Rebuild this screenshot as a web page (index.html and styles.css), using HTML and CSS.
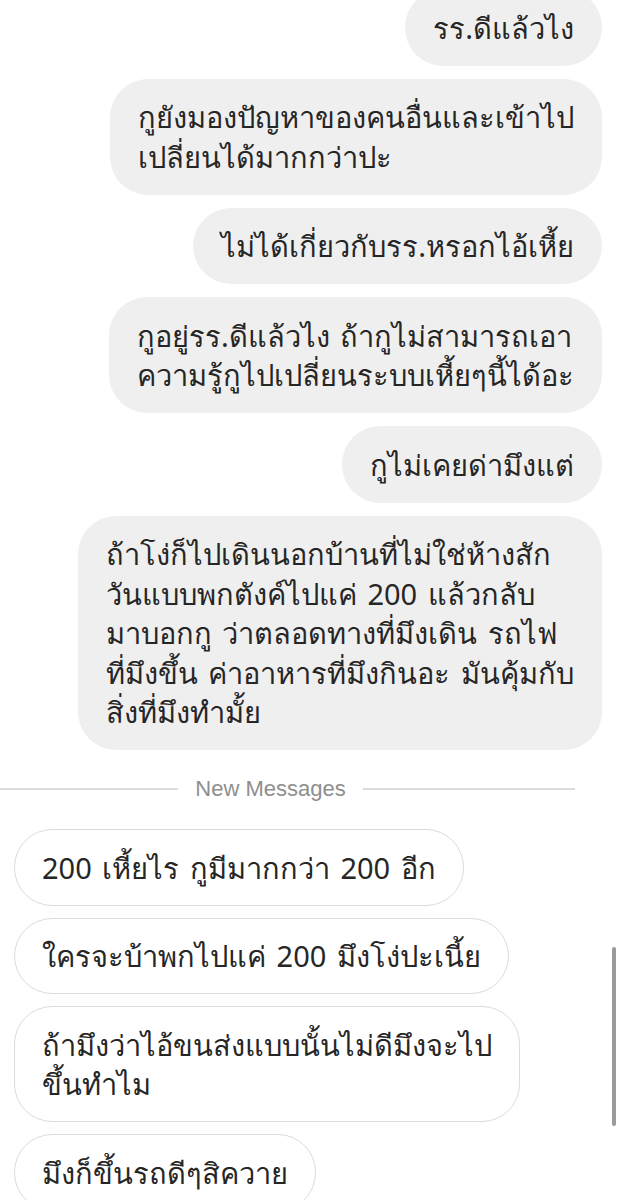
FILE: index.html
```html
<!DOCTYPE html>
<html lang="th">
<head>
    <meta charset="UTF-8">
    <meta name="viewport" content="width=device-width, initial-scale=1.0">
    <title>Chat</title>
    <link rel="stylesheet" href="styles.css">
</head>
<body>
    <div class="chat">
        <!-- Sent messages -->
        <div class="thread sent">
            <div class="bubble">รร.ดีแล้วไง</div>
            <div class="bubble">กูยังมองปัญหาของคนอื่นและเข้าไป<br>เปลี่ยนได้มากกว่าปะ</div>
            <div class="bubble">ไม่ได้เกี่ยวกับรร.หรอกไอ้เหี้ย</div>
            <div class="bubble">กูอยู่รร.ดีแล้วไง ถ้ากูไม่สามารถเอา<br>ความรู้กูไปเปลี่ยนระบบเหี้ยๆนี้ได้อะ</div>
            <div class="bubble">กูไม่เคยด่ามึงแต่</div>
            <div class="bubble">ถ้าโง่ก็ไปเดินนอกบ้านที่ไม่ใช่ห้างสัก<br>วันแบบพกตังค์ไปแค่ 200 แล้วกลับ<br>มาบอกกู ว่าตลอดทางที่มึงเดิน รถไฟ<br>ที่มึงขึ้น ค่าอาหารที่มึงกินอะ มันคุ้มกับ<br>สิ่งที่มึงทำมั้ย</div>
        </div>

        <div class="divider"><span>New Messages</span></div>

        <!-- Received messages -->
        <div class="thread received">
            <div class="bubble">200 เหี้ยไร กูมีมากกว่า 200 อีก</div>
            <div class="bubble">ใครจะบ้าพกไปแค่ 200 มึงโง่ปะเนี้ย</div>
            <div class="bubble">ถ้ามึงว่าไอ้ขนส่งแบบนั้นไม่ดีมึงจะไป<br>ขึ้นทำไม</div>
            <div class="bubble">มึงก็ขึ้นรถดีๆสิควาย</div>
        </div>

        <div class="scrollbar"></div>
    </div>
</body>
</html>
```

FILE: styles.css
```css
/* General Styles */
body {
    margin: 0;
    padding: 0;
    background: #fff;
    color: #262626;
    font-family: 'Noto Sans', sans-serif;
    overflow: hidden;
}

.chat {
    position: relative;
    height: 1200px;
    overflow: hidden;
}

/* Message Lists */
.thread {
    display: flex;
    flex-direction: column;
}

.sent {
    align-items: flex-end;
    gap: 13px;
    padding-right: 20px;
    margin-top: -11px;
}

.received {
    align-items: flex-start;
    gap: 12px;
    padding-left: 14px;
}

.bubble {
    font-size: 29px;
    line-height: 39.5px;
    word-spacing: 3px;
    padding: 18.5px 28px;
    border-radius: 38px;
    white-space: nowrap;
}

.sent .bubble {
    background: #efefef;
}

.received .bubble {
    background: #fff;
    border: 1.5px solid #dbdbdb;
    padding: 17.5px 27px;
}

/* Divider */
.divider {
    display: flex;
    align-items: center;
    gap: 17px;
    width: 609px;
    height: 24px;
    margin: 27px 0 28px -34px;
    color: #8e8e8e;
    font-family: 'Liberation Sans', Arial, sans-serif;
    font-size: 22px;
}

.divider::before,
.divider::after {
    content: '';
    flex: 1;
    height: 1.5px;
    background: #dbdbdb;
}

/* Scrollbar thumb overlay */
.scrollbar {
    position: absolute;
    left: 612px;
    top: 947px;
    width: 4px;
    height: 179px;
    border-radius: 2px;
    background: #9a9a9a;
}
```
